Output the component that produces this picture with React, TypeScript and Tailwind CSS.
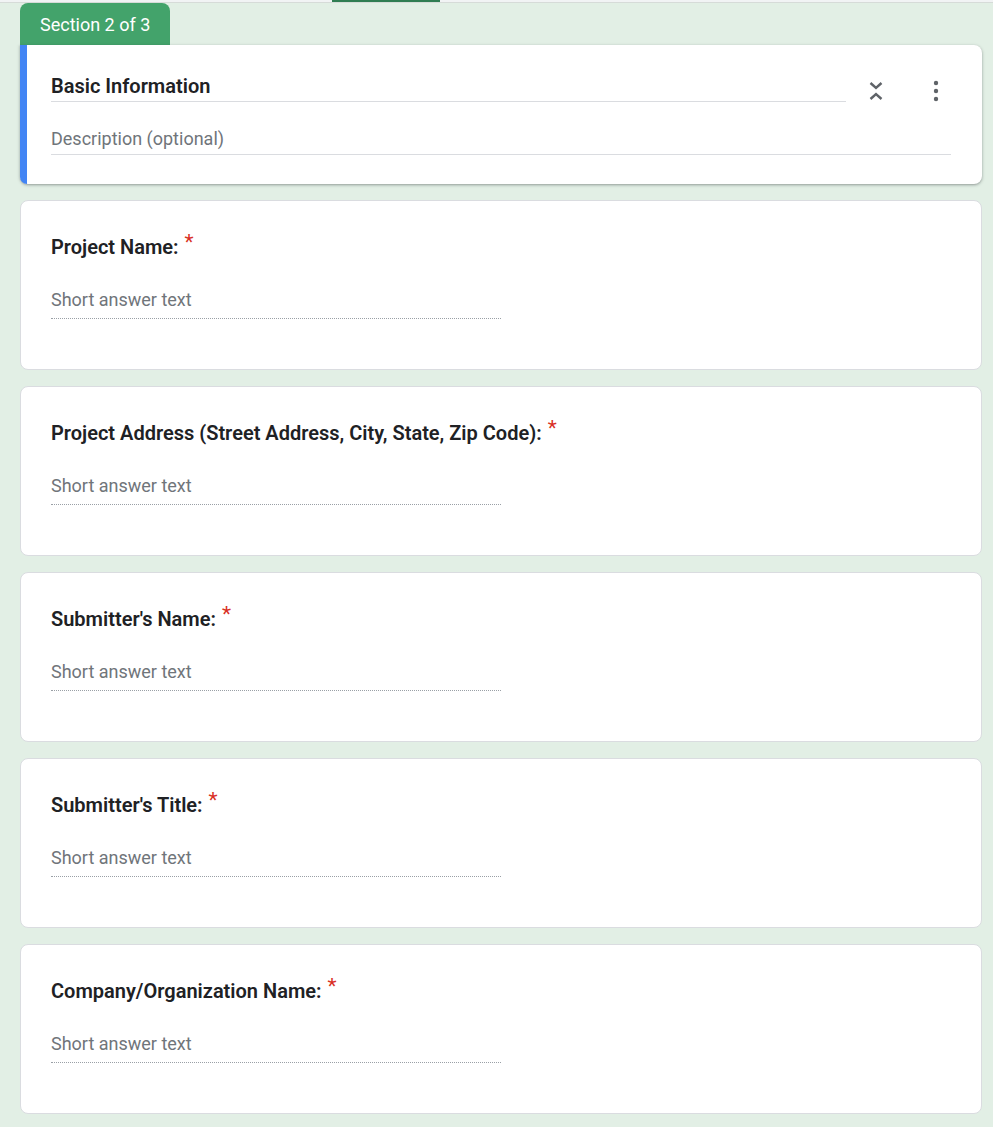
const questions = [
  'Project Name:',
  'Project Address (Street Address, City, State, Zip Code):',
  "Submitter's Name:",
  "Submitter's Title:",
  'Company/Organization Name:',
]

const CollapseIcon = () => (
  <svg width="24" height="24" viewBox="0 0 24 24" fill="none" stroke="#5f6368" strokeWidth="2.4">
    <path d="M6.5 4 12 9l5.5-5" />
    <path d="M6.5 20 12 15l5.5 5" />
  </svg>
)

const MoreIcon = () => (
  <svg width="24" height="24" viewBox="0 0 24 24" fill="#5f6368">
    <circle cx="12" cy="4" r="2.2" />
    <circle cx="12" cy="12" r="2.2" />
    <circle cx="12" cy="20" r="2.2" />
  </svg>
)

const QuestionCard = ({ title }: { title: string }) => {
  return (
    <div className="h-[170px] rounded-lg border border-[#dadce0] bg-white pl-[30px] pt-[31px]">
      <div className="flex items-start text-[20px] font-semibold leading-[30px] text-[#202124]">
        <span>{title}</span>
        <span className="ml-[6px] -mt-[5px] text-[21px] font-normal text-[#d93025]">*</span>
      </div>
      <div className="mt-[26px] w-[450px] border-b border-dotted border-[#9aa0a6] pb-[6px] text-[18px] leading-[24px] text-[#70757a]">
        Short answer text
      </div>
    </div>
  )
}

export default function App() {
  return (
    <div className="min-h-[1127px] bg-[#e2efe5] font-['Roboto',sans-serif]">
      <div className="h-[3px] border-b border-[#d6dbd8] bg-[#f1f3f4] pl-[332px]">
        <div className="h-[2px] w-[108px] bg-[#2f7d52]"></div>
      </div>
      <div className="pl-[20px] pr-[11px]">
        <div className="flex h-[42px] w-[150px] items-center rounded-t-lg bg-[#43a36b] pl-[20px] text-[18px] text-white">
          Section 2 of 3
        </div>
        <div className="flex h-[139px] rounded-b-lg rounded-tr-lg bg-white shadow-[0_1px_2px_rgba(60,64,67,0.3),0_1px_3px_1px_rgba(60,64,67,0.15)]">
          <div className="w-[7px] rounded-bl-lg bg-[#4285f4]"></div>
          <div className="flex-1 pl-[24px] pr-[31px] pt-[26px]">
            <div className="flex items-start">
              <div className="mr-[18px] flex-1 border-b border-[#dadce0] text-[20px] font-semibold leading-[30px] text-[#202124]">
                Basic Information
              </div>
              <div className="mr-[36px] mt-[8px]">
                <CollapseIcon />
              </div>
              <div className="mr-[3px] mt-[8px]">
                <MoreIcon />
              </div>
            </div>
            <div className="mt-[24px] border-b border-[#dadce0] pb-[3px] text-[18px] leading-[24px] text-[#70757a]">
              Description (optional)
            </div>
          </div>
        </div>
        <div className="mt-[16px] flex flex-col gap-[16px]">
          {questions.map((q) => (
            <QuestionCard key={q} title={q} />
          ))}
        </div>
      </div>
    </div>
  )
}
